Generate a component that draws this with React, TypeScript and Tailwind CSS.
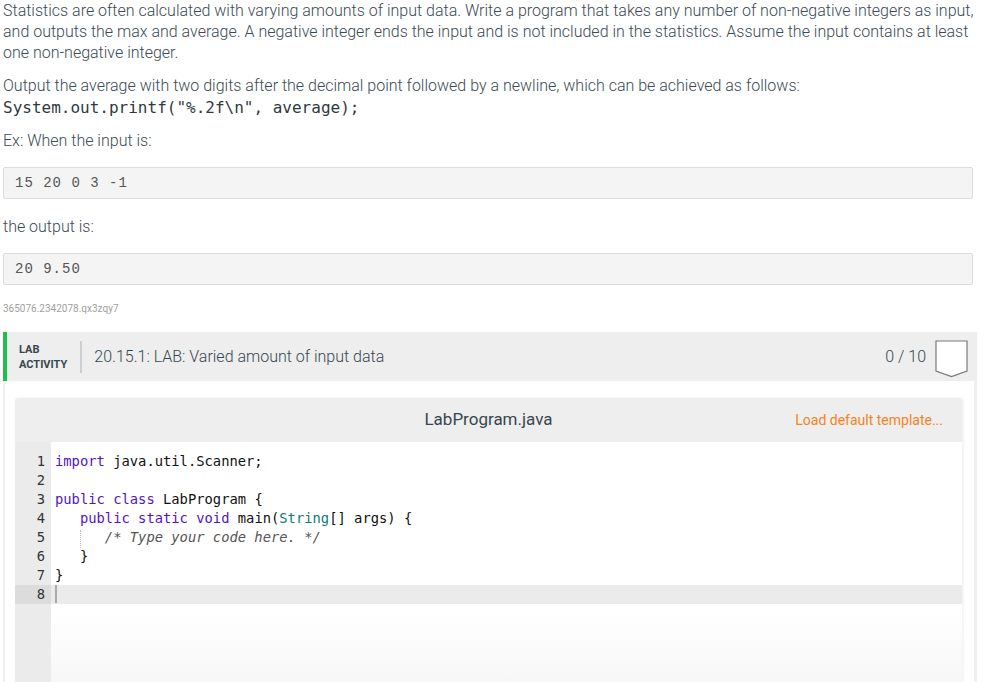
import React from "react";

const kw = "text-[#5214c8]";

function CodeLine({ children }: { children?: React.ReactNode }) {
  return <div className="h-[19px] whitespace-pre">{children}</div>;
}

export default function App() {
  const lines: React.ReactNode[] = [
    <>
      <span className={kw}>import</span> java.util.Scanner;
    </>,
    <></>,
    <>
      <span className={kw}>public</span> <span className={kw}>class</span> LabProgram {"{"}
    </>,
    <>
      {"   "}
      <span className={kw}>public</span> <span className={kw}>static</span> <span className={kw}>void</span> main(
      <span className="text-[#0f7a78]">String</span>[] args) {"{"}
    </>,
    <>
      <span className="relative">
        {"   "}
        <span className="absolute left-[25px] top-[1px] h-[18px] border-l border-dotted border-[#bbb]" />
      </span>
      {"   "}
      <span className="italic text-[#555]">/* Type your code here. */</span>
    </>,
    <>{"   }"}</>,
    <>{"}"}</>,
    <></>,
  ];

  return (
    <div className="w-[997px] h-[682px] overflow-hidden bg-white font-['Roboto',sans-serif] text-[#3b4a53]">
      <div className="pl-[3px] w-[975px]">
        <p className="text-[16px] leading-[21px] font-light">
          Statistics are often calculated with varying amounts of input data. Write a program that takes any number of
          non-negative integers as input, and outputs the max and average. A negative integer ends the input and is not
          included in the statistics. Assume the input contains at least one non-negative integer.
        </p>
        <p className="mt-[12px] text-[16px] leading-[21px] font-light">
          Output the average with two digits after the decimal point followed by a newline, which can be achieved as
          follows:
        </p>
        <div className="mt-[1px] font-['DejaVu_Sans_Mono',monospace] text-[16px] leading-[22px] text-[#2f3a40]">
          System.out.printf("%.2f\n", average);
        </div>
        <p className="mt-[11px] text-[16px] leading-[21px] font-light">Ex: When the input is:</p>
        <div className="mt-[16px] w-[970px] h-[32px] bg-[#f4f4f4] border border-[#dcdcdc] rounded-[2px] pl-[11px] flex items-center font-['Liberation_Mono',monospace] text-[14px] tracking-[1px] text-[#555]">
          15 20 0 3 -1
        </div>
        <p className="mt-[17px] text-[16px] leading-[21px] font-light">the output is:</p>
        <div className="mt-[16px] w-[970px] h-[32px] bg-[#f4f4f4] border border-[#dcdcdc] rounded-[2px] pl-[11px] flex items-center font-['Liberation_Mono',monospace] text-[14px] tracking-[1px] text-[#555]">
          20 9.50
        </div>
        <div className="mt-[18px] text-[10px] leading-[12px] text-[#a0a0a0]">365076.2342078.qx3zqy7</div>
      </div>

      <div className="ml-[3px] w-[974px] mt-[17px]">
        <div className="h-[49px] bg-[#eeeeee] border-l-[4px] border-[#1fbf4f] flex items-center pl-[12px] pr-[9px]">
          <div className="text-[11px] leading-[15px] font-bold text-[#37474f] pr-[13px] border-r-2 border-[#cfcfcf] h-[32px] flex flex-col justify-center">
            <span>LAB</span>
            <span>ACTIVITY</span>
          </div>
          <div className="pl-[12px] text-[16px] font-light text-[#37474f]">20.15.1: LAB: Varied amount of input data</div>
          <div className="ml-auto flex items-center gap-[9px]">
            <span className="text-[16px] font-light text-[#37474f]">0 / 10</span>
            <svg width="33" height="38" viewBox="0 0 33 38" className="mt-[5px]">
              <path d="M1 1 H32 V31 L16.5 36.5 L1 31 Z" fill="white" stroke="#7a7a7a" strokeWidth="1.2" />
            </svg>
          </div>
        </div>

        <div className="border-l-2 border-r-[3px] border-[#f0f0f0] pt-[17px] pl-[10px] pr-[11px] h-[301px]">
          <div className="w-[947px] h-[284px] shadow-[1px_0_3px_rgba(0,0,0,0.08)] rounded-t-[3px] overflow-hidden flex flex-col">
            <div className="h-[44px] bg-[#eeeeee] flex items-center relative">
              <span className="mx-auto text-[17px] text-[#37474f]">LabProgram.java</span>
              <span className="absolute right-[19px] text-[14px] text-[#f5821f]">Load default template...</span>
            </div>
            <div className="flex-1 flex bg-gradient-to-b from-white from-[70%] to-[#f7f7f7] font-['DejaVu_Sans_Mono',monospace] text-[13.8px] text-[#111]">
              <div className="w-[36px] bg-[#ebebeb] pt-[10px]">
                {lines.map((_, i) => (
                  <div
                    key={i}
                    className={`h-[19px] pr-[6px] text-right leading-[19px] text-[#333] ${
                      i === 7 ? "bg-[#dcdcdc]" : ""
                    }`}
                  >
                    {i + 1}
                  </div>
                ))}
              </div>
              <div className="flex-1 pt-[10px] leading-[19px]">
                {lines.map((l, i) =>
                  i === 7 ? (
                    <div key={i} className="h-[19px] bg-[#ebebeb] pl-[4px]">
                      <span className="inline-block w-[2px] h-[18px] bg-[#aaa] align-top" />
                    </div>
                  ) : (
                    <div key={i} className="pl-[4px]">
                      <CodeLine>{l}</CodeLine>
                    </div>
                  )
                )}
              </div>
            </div>
          </div>
        </div>
      </div>
    </div>
  );
}
